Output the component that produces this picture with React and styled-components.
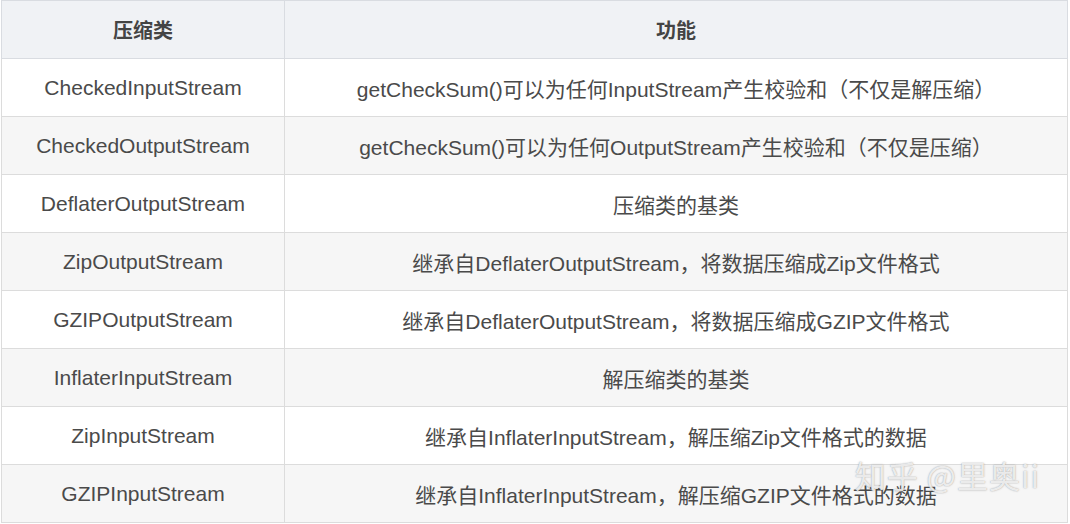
import React from 'react'
import styled, { createGlobalStyle } from 'styled-components'

const GlobalStyle = createGlobalStyle`
  html, body {
    margin: 0;
    padding: 0;
    background: #ffffff;
  }
  body {
    font-family: "Liberation Sans", Arial, "Noto Sans CJK SC", sans-serif;
  }
`

const Page = styled.div`
  position: relative;
  width: 1070px;
  height: 524px;
  overflow: hidden;
  padding: 0 0 0 1px;
  box-sizing: border-box;
`

const Table = styled.table`
  width: 1067px;
  border-collapse: collapse;
  table-layout: fixed;
  color: #4a4a4a;
  font-size: 21px;
`

const HeadCell = styled.th`
  height: 57px;
  padding: 0;
  background: #f0f2f5;
  border: 1px solid #d9dce1;
  font-weight: bold;
  font-size: 20px;
  color: #444444;
  text-align: center;
  vertical-align: middle;
`

const Row = styled.tr`
  background: ${p => (p.$striped ? '#f6f6f6' : '#ffffff')};
`

const Cell = styled.td`
  height: 57px;
  padding: 0;
  border: 1px solid #dcdcdc;
  text-align: center;
  vertical-align: middle;
`

const Watermark = styled.div`
  position: absolute;
  right: 30px;
  bottom: 27px;
  font-family: "Noto Sans CJK SC", "Liberation Sans", sans-serif;
  font-size: 31px;
  letter-spacing: 1px;
  color: rgba(255, 255, 255, 0.8);
  text-shadow: 0 0 1px rgba(120, 120, 120, 0.55), 0 0 2px rgba(120, 120, 120, 0.35);
  pointer-events: none;
`

const rows = [
  ['CheckedInputStream', 'getCheckSum()可以为任何InputStream产生校验和（不仅是解压缩）'],
  ['CheckedOutputStream', 'getCheckSum()可以为任何OutputStream产生校验和（不仅是压缩）'],
  ['DeflaterOutputStream', '压缩类的基类'],
  ['ZipOutputStream', '继承自DeflaterOutputStream，将数据压缩成Zip文件格式'],
  ['GZIPOutputStream', '继承自DeflaterOutputStream，将数据压缩成GZIP文件格式'],
  ['InflaterInputStream', '解压缩类的基类'],
  ['ZipInputStream', '继承自InflaterInputStream，解压缩Zip文件格式的数据'],
  ['GZIPInputStream', '继承自InflaterInputStream，解压缩GZIP文件格式的数据']
]

export default function App() {
  return (
    <Page>
      <GlobalStyle />
      <Table>
        <colgroup>
          <col style={{ width: 283 }} />
          <col />
        </colgroup>
        <thead>
          <tr>
            <HeadCell>压缩类</HeadCell>
            <HeadCell>功能</HeadCell>
          </tr>
        </thead>
        <tbody>
          {rows.map(([name, desc], i) => (
            <Row key={name} $striped={i % 2 === 1}>
              <Cell>{name}</Cell>
              <Cell>{desc}</Cell>
            </Row>
          ))}
        </tbody>
      </Table>
      <Watermark>知乎 @里奥ii</Watermark>
    </Page>
  )
}
